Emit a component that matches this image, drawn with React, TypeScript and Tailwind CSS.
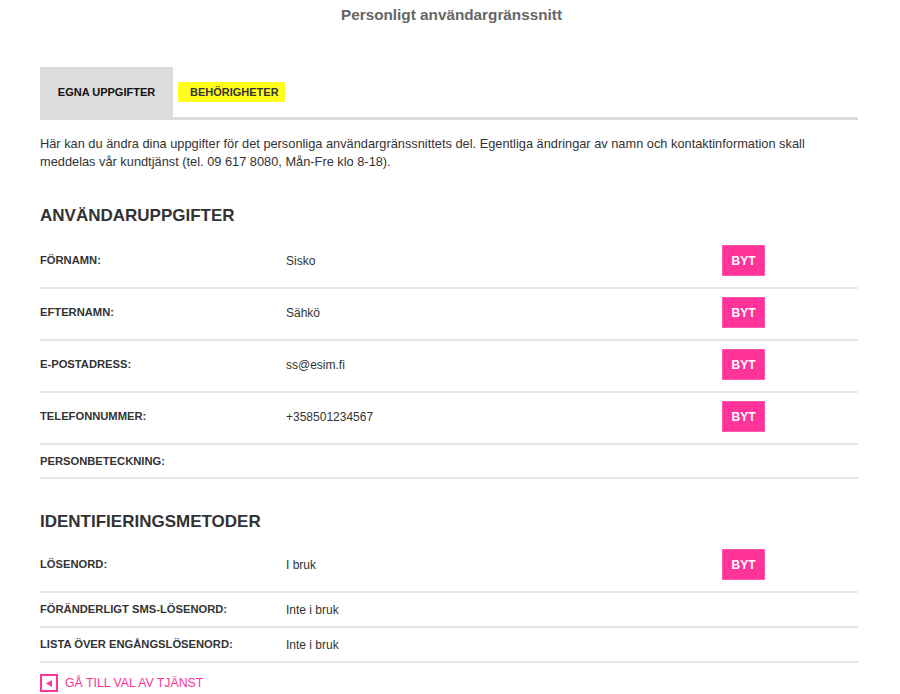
import React from "react";

const Byt = () => (
  <button className="w-[43px] h-[31px] bg-[#ff3399] border border-[#ff5aa9] text-white text-[12px] font-bold leading-none">
    BYT
  </button>
);

type Row = { label: string; value?: string; btn?: boolean; h?: "big" | "small" | "mid" };

const RowView = ({ r }: { r: Row }) => {
  const cls =
    r.h === "big"
      ? "pt-[8px] pb-[11px]"
      : r.h === "mid"
      ? "h-[34px]"
      : "h-[35px]";
  return (
    <div className={`flex items-center border-b-2 border-[#e6e6e6] ${cls}`}>
      <div className="w-[246px] text-[11.2px] font-bold text-[#333]">{r.label}</div>
      <div className="w-[436px] text-[12px] text-[#333]">{r.value ?? ""}</div>
      {r.btn ? <Byt /> : null}
    </div>
  );
};

export default function App() {
  const users: Row[] = [
    { label: "FÖRNAMN:", value: "Sisko", btn: true, h: "big" },
    { label: "EFTERNAMN:", value: "Sähkö", btn: true, h: "big" },
    { label: "E-POSTADRESS:", value: "ss@esim.fi", btn: true, h: "big" },
    { label: "TELEFONNUMMER:", value: "+358501234567", btn: true, h: "big" },
    { label: "PERSONBETECKNING:", h: "mid" },
  ];
  const ids: Row[] = [
    { label: "LÖSENORD:", value: "I bruk", btn: true, h: "big" },
    { label: "FÖRÄNDERLIGT SMS-LÖSENORD:", value: "Inte i bruk", h: "small" },
    { label: "LISTA ÖVER ENGÅNGSLÖSENORD:", value: "Inte i bruk", h: "small" },
  ];
  return (
    <div className="w-[900px] h-[694px] bg-white overflow-hidden" style={{ fontFamily: '"Liberation Sans", Arial, sans-serif' }}>
      <div className="pt-[5px] pl-[3px] text-center text-[15.3px] leading-[20px] font-bold text-[#666]">
        Personligt användargränssnitt
      </div>
      <div className="ml-[40px] w-[818px]">
        <div className="mt-[42px] flex border-b-[3px] border-[#dcdcdc]">
          <div className="h-[50px] w-[133px] bg-[#dcdcdc] flex items-center justify-center text-[11px] font-bold text-[#111]">
            EGNA UPPGIFTER
          </div>
          <div className="h-[50px] flex items-center pl-[5px]">
            <span className="bg-[#ffff1a] pl-[12px] pr-[6px] h-[20px] flex items-center text-[11px] font-bold text-[#333] rounded-[2px]">
              BEHÖRIGHETER
            </span>
          </div>
        </div>
        <p className="mt-[15px] text-[12.8px] leading-[18px] text-[#333]">
          Här kan du ändra dina uppgifter för det personliga användargränssnittets del. Egentliga ändringar av namn och kontaktinformation skall meddelas vår kundtjänst (tel. 09 617 8080, Mån-Fre klo 8-18).
        </p>
        <h2 className="mt-[33px] text-[17px] leading-[24px] font-bold text-[#333]">ANVÄNDARUPPGIFTER</h2>
        <div className="mt-[9px]">
          {users.map((r) => (
            <RowView key={r.label} r={r} />
          ))}
        </div>
        <h2 className="mt-[31px] text-[17px] leading-[24px] font-bold text-[#333]">IDENTIFIERINGSMETODER</h2>
        <div className="mt-[7px]">
          {ids.map((r) => (
            <RowView key={r.label} r={r} />
          ))}
        </div>
        <a className="mt-[11px] flex items-center gap-[7px] text-[12.3px] text-[#ff3399]" href="#">
          <span className="w-[18px] h-[18px] border-2 border-[#ff3399] flex items-center justify-center">
            <svg width="6" height="7" viewBox="0 0 6 7">
              <polygon points="6,0 6,7 0,3.5" fill="#ff3399" />
            </svg>
          </span>
          GÅ TILL VAL AV TJÄNST
        </a>
      </div>
    </div>
  );
}
